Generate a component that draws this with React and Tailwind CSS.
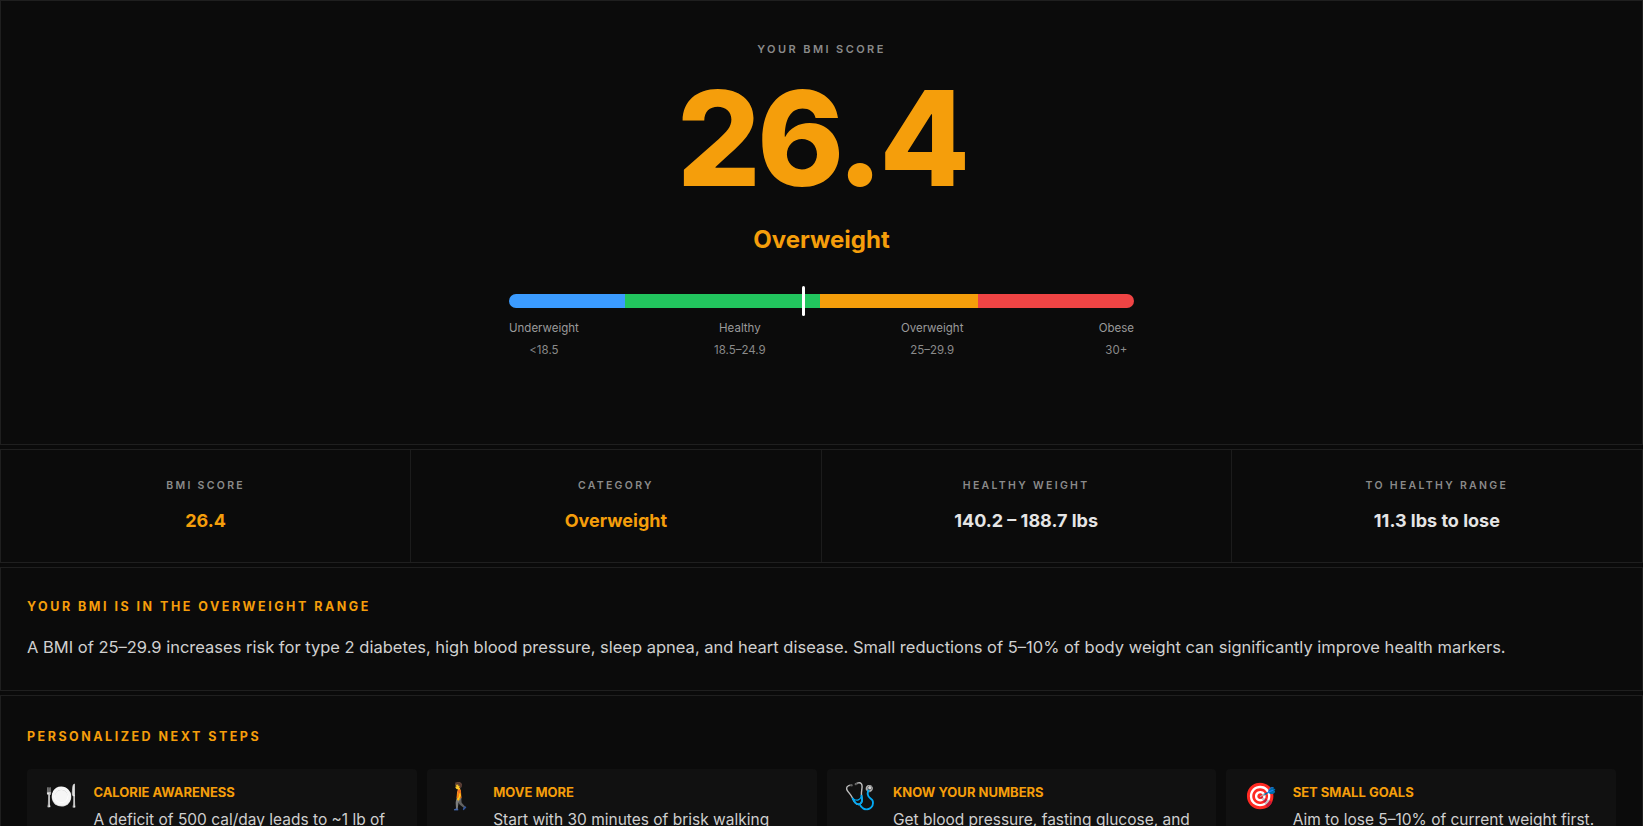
const STATS = [
  { label: 'BMI Score', value: '26.4', accent: true },
  { label: 'Category', value: 'Overweight', accent: true },
  { label: 'Healthy Weight', value: '140.2 – 188.7 lbs' },
  { label: 'To Healthy Range', value: '11.3 lbs to lose' },
]

const STEPS = [
  { icon: '🍽️', title: 'Calorie Awareness', text: 'A deficit of 500 cal/day leads to ~1 lb of weight loss per week.' },
  { icon: '🚶', title: 'Move More', text: 'Start with 30 minutes of brisk walking five days a week.' },
  { icon: '🩺', title: 'Know Your Numbers', text: 'Get blood pressure, fasting glucose, and cholesterol checked.' },
  { icon: '🎯', title: 'Set Small Goals', text: 'Aim to lose 5–10% of current weight first.' },
]

const SCALE = [
  ['Underweight', '<18.5'],
  ['Healthy', '18.5–24.9'],
  ['Overweight', '25–29.9'],
  ['Obese', '30+'],
]

export default function App() {
  return (
    <div className="min-h-screen bg-[#0a0a0a] text-[#d4d4d4] flex flex-col gap-[4px]" style={{ fontFamily: 'Inter, "Noto Sans", "Noto Color Emoji", sans-serif' }}>
      {/* Hero */}
      <div className="border border-[#1f1f1f] bg-[#0b0b0b] h-[445px] flex flex-col items-center pt-[40px]">
        <p className="text-[11px] font-semibold tracking-[0.22em] text-[#8a8a8a] uppercase">Your BMI Score</p>
        <p className="text-[132px] leading-[1] font-extrabold text-[#f59e0b] tracking-[-0.03em] mt-[14px]">26.4</p>
        <p className="text-[24px] font-bold text-[#f59e0b] mt-[18px]">Overweight</p>
        <div className="w-[625px] mt-[36px]">
          <div className="relative">
            <div className="flex h-[14px] rounded-full overflow-hidden">
              <div className="w-[18.6%] bg-[#3b9bff]" />
              <div className="w-[31.2%] bg-[#22c55e]" />
              <div className="w-[25.2%] bg-[#f59e0b]" />
              <div className="flex-1 bg-[#ef4444]" />
            </div>
            <div className="absolute top-[-8px] left-[46.8%] w-[3px] h-[30px] bg-white rounded-sm" />
          </div>
          <div className="flex justify-between mt-[12px] text-[11.5px] text-[#9a9a9a]">
            {SCALE.map(([n, r]) => (
              <div key={n} className="text-center">
                <p>{n}</p>
                <p className="mt-[5px] text-[#8a8a8a]">{r}</p>
              </div>
            ))}
          </div>
        </div>
      </div>

      {/* Stats */}
      <div className="grid grid-cols-4 border border-[#1f1f1f] h-[114px]">
        {STATS.map((s, i) => (
          <div key={s.label} className={`flex flex-col items-center justify-center gap-[14px] bg-[#0b0b0b] ${i < 3 ? 'border-r border-[#1c1c1c]' : ''}`}>
            <p className="text-[10.5px] font-semibold tracking-[0.22em] uppercase text-[#8a8a8a]">{s.label}</p>
            <p className={`text-[18px] font-bold ${s.accent ? 'text-[#f59e0b]' : 'text-[#e5e5e5]'}`}>{s.value}</p>
          </div>
        ))}
      </div>

      {/* Info */}
      <div className="border border-[#1f1f1f] bg-[#0b0b0b] px-[26px] h-[124px] flex flex-col justify-center gap-[18px]">
        <p className="text-[12.5px] font-bold tracking-[0.2em] uppercase text-[#f59e0b]">Your BMI is in the overweight range</p>
        <p className="text-[16.5px] text-[#d0d0d0]">A BMI of 25–29.9 increases risk for type 2 diabetes, high blood pressure, sleep apnea, and heart disease. Small reductions of 5–10% of body weight can significantly improve health markers.</p>
      </div>

      {/* Next steps */}
      <div className="border border-[#1f1f1f] bg-[#0b0b0b] px-[26px] pt-[32px] flex-1">
        <p className="text-[12.5px] font-bold tracking-[0.2em] uppercase text-[#f59e0b]">Personalized Next Steps</p>
        <div className="grid grid-cols-4 gap-[10px] mt-[22px]">
          {STEPS.map((s) => (
            <div key={s.title} className="bg-[#111111] rounded-[4px] px-[18px] py-[14px] flex gap-[16px]">
              <span className="text-[26px] leading-[1]">{s.icon}</span>
              <div>
                <p className="text-[13px] font-bold uppercase text-[#f59e0b]">{s.title}</p>
                <p className="text-[15.5px] text-[#cfcfcf] mt-[6px] leading-[1.5]">{s.text}</p>
              </div>
            </div>
          ))}
        </div>
      </div>
    </div>
  )
}
